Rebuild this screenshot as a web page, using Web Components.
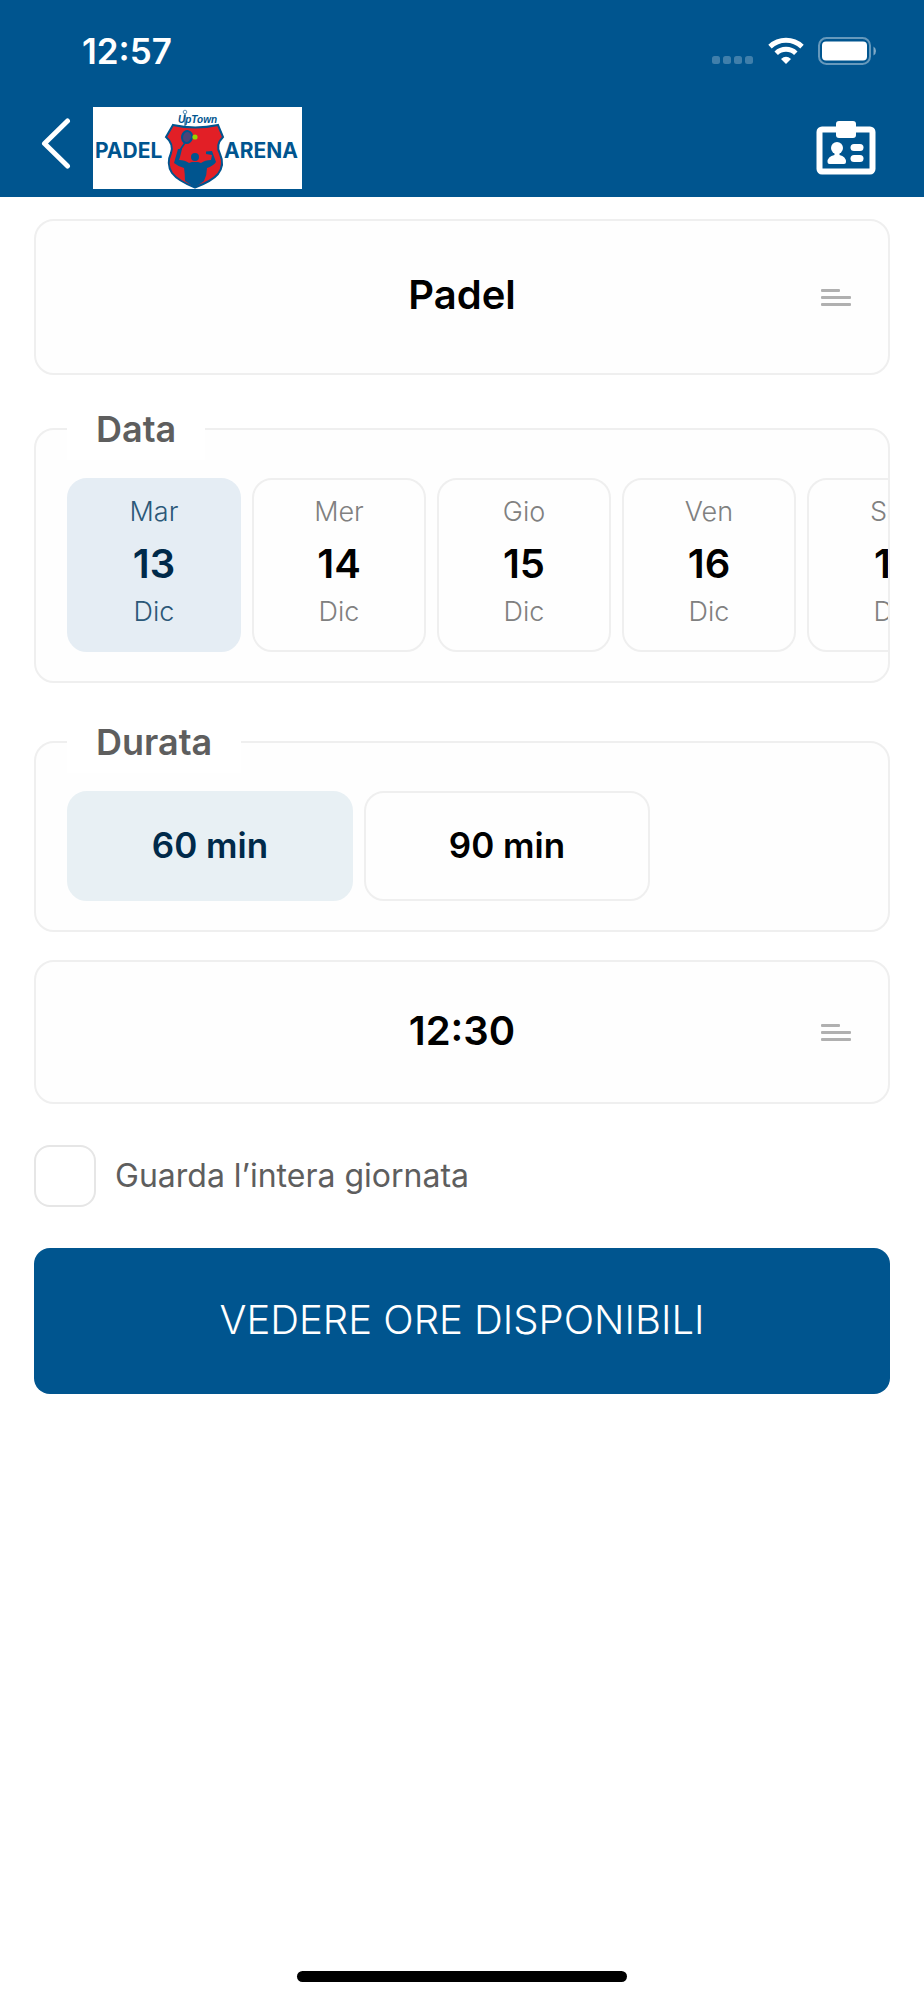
<!DOCTYPE html>
<html lang="it">
<head>
<meta charset="utf-8">
<meta name="viewport" content="width=device-width, initial-scale=1">
<title>Padel Arena</title>
<style>
  body {
    margin: 0;
    background: #fff;
    font-family: Inter, "Liberation Sans", sans-serif;
    --brand: #00558f;
    --navy: #002a4a;
    --line: #efefef;
    --card: #fefefe;
    --grey: #5e5e5e;
  }
</style>
</head>
<body>
<booking-app></booking-app>

<script>
class StatusBar extends HTMLElement {
  constructor() {
    super();
    this.attachShadow({ mode: 'open' });
    this.shadowRoot.innerHTML = `
      <style>
        :host {
          display: flex;
          align-items: center;
          justify-content: space-between;
          height: 101px;
          padding: 0 48px 0 82px;
          color: #fff;
        }
        time {
          font-size: 35px;
          font-weight: 600;
          line-height: 40px;
        }
        .icons {
          display: flex;
          align-items: center;
          gap: 14px;
        }
        svg {
          display: block;
        }
      </style>
      <time><slot></slot></time>
      <div class="icons">
        <svg width="42" height="28" viewBox="0 0 42 28" fill="#fff" fill-opacity="0.25">
          <rect x="0" y="19" width="8" height="8" rx="2.5"/>
          <rect x="11" y="19" width="8" height="8" rx="2.5"/>
          <rect x="22" y="19" width="8" height="8" rx="2.5"/>
          <rect x="33" y="19" width="8" height="8" rx="2.5"/>
        </svg>
        <svg width="36" height="28" viewBox="0 0 36 28" fill="none" stroke="#fff">
          <path d="M2 9.6 A23.5 23.5 0 0 1 34 9.6" stroke-width="5"/>
          <path d="M8.2 16.2 A14.2 14.2 0 0 1 27.8 16.2" stroke-width="5"/>
          <path d="M18 27 L13 22 Q18 17.6 23 22 Z" fill="#fff" stroke="none"/>
        </svg>
        <svg width="58" height="28" viewBox="0 0 58 28">
          <rect x="1" y="1" width="51" height="26" rx="7.5" fill="none" stroke="#fff" stroke-opacity="0.4" stroke-width="2"/>
          <rect x="4" y="4.5" width="45" height="19" rx="4" fill="#fff"/>
          <path d="M55.5 9.5 Q58 11 58 14 Q58 17 55.5 18.5 Z" fill="#fff" fill-opacity="0.5"/>
        </svg>
      </div>
    `;
  }
}

class ArenaLogo extends HTMLElement {
  constructor() {
    super();
    this.attachShadow({ mode: 'open' });
    this.shadowRoot.innerHTML = `
      <style>
        :host {
          display: block;
          background: #fff;
        }
        svg {
          display: block;
        }
        text {
          fill: #00558f;
          font-weight: 700;
        }
        .name {
          font-family: Inter, sans-serif;
          font-size: 21px;
        }
        .top {
          font-family: "Liberation Sans Narrow", "Liberation Sans", sans-serif;
          font-size: 10px;
          font-style: italic;
        }
      </style>
      <svg width="209" height="82" viewBox="0 0 209 82" role="img" aria-label="UpTown Padel Arena">
        <path d="M80 18 Q102 23 125 18 L130 30 Q122 38 127 47 Q132 58 125 67 Q119 74 102 80.500 Q85 74 79 66 Q73 57 78 46 Q81 37 73 30 Z" fill="#e21f26" stroke="#00558f" stroke-width="2"/>
        <ellipse cx="94" cy="30" rx="5" ry="6" fill="#4d4376" stroke="#00558f" stroke-width="2" transform="rotate(12 94 30)"/>
        <path d="M92.500 35 L87 43" stroke="#00558f" stroke-width="1.800"/>
        <circle cx="102" cy="30" r="2.600" fill="#95d600"/>
        <circle cx="102" cy="50" r="4" fill="#00558f"/>
        <path d="M85 42 L89 42 L87 50 L86 53 Q92 53 96 56 L99 55 L105 55 L108 56 Q112 53 118 53 L119 48 L113 47 L113 44.500 L119 44 L123 55 Q120 59 114 61 Q114 68 111 74 L102 80.500 L92 74 Q92 67 91 61 Q86 60 81 56 Z" fill="#00558f"/>
        <circle cx="92" cy="5" r="1.800" fill="none" stroke="#5f92b8"/>
        <path d="M92 7 V19" stroke="#00558f"/>
        <text class="top" x="85" y="15.500">UpTown</text>
        <text class="name" x="2" y="51">PADEL</text>
        <text class="name" x="131" y="51">ARENA</text>
      </svg>
    `;
  }
}

class NavBar extends HTMLElement {
  constructor() {
    super();
    this.attachShadow({ mode: 'open' });
    this.shadowRoot.innerHTML = `
      <style>
        :host {
          display: flex;
          align-items: center;
          padding: 6px 48px 8px 40px;
        }
        button {
          display: block;
          margin: 0;
          padding: 0;
          border: 0;
          background: none;
          cursor: pointer;
        }
        .back {
          margin-right: 21px;
        }
        .member {
          margin-left: auto;
        }
        svg {
          display: block;
        }
      </style>
      <button class="back" type="button" aria-label="Indietro">
        <svg width="32" height="60" viewBox="0 0 32 60" fill="none" stroke="#fff" stroke-width="5" stroke-linecap="round" stroke-linejoin="round">
          <path d="M27.500 3 L4.500 25.500 L27.500 48"/>
        </svg>
      </button>
      <slot></slot>
      <button class="member" type="button" aria-label="Tessera">
        <svg width="60" height="54" viewBox="0 0 60 54" fill="#fff">
          <rect x="3.500" y="8.500" width="53" height="42" rx="2.500" fill="none" stroke="#fff" stroke-width="6"/>
          <rect x="20" y="0" width="20" height="17" rx="3"/>
          <circle cx="21" cy="27" r="6"/>
          <path d="M18.500 30 H23.500 V34 Q30 35.500 30 41 Q30 43 28 43 H13.500 Q11.500 43 11.500 41 Q11.500 35.500 18.500 34 Z"/>
          <rect x="34.500" y="23" width="13" height="7" rx="3.500"/>
          <rect x="34.500" y="34" width="13" height="7" rx="3.500"/>
        </svg>
      </button>
    `;
  }
}

// Select box with a centred value and a small list icon on the right
class PickerField extends HTMLElement {
  constructor() {
    super();
    this.attachShadow({ mode: 'open' });
    this.shadowRoot.innerHTML = `
      <style>
        :host {
          display: grid;
          align-items: center;
          border: 2px solid var(--line);
          border-radius: 20px;
          background: var(--card);
        }
        select, svg {
          grid-area: 1 / 1;
        }
        select {
          appearance: none;
          width: 100%;
          margin: 0;
          padding: var(--pad, 50px 70px 54px);
          border: 0;
          border-radius: 18px;
          background: none;
          color: #000;
          font: 600 40px/48px Inter, "Liberation Sans", sans-serif;
          text-align: center;
          text-align-last: center;
        }
        svg {
          justify-self: end;
          margin-right: 37px;
          pointer-events: none;
        }
      </style>
      <select aria-label="${this.getAttribute('label')}">
        <option>${this.getAttribute('value')}</option>
      </select>
      <svg width="30" height="17" viewBox="0 0 30 17" fill="#b0b0b0">
        <rect x="0" y="0" width="19" height="3" rx="1"/>
        <rect x="0" y="7" width="30" height="3" rx="1"/>
        <rect x="0" y="14" width="30" height="3" rx="1"/>
      </svg>
    `;
  }
}

class FieldGroup extends HTMLElement {
  constructor() {
    super();
    this.attachShadow({ mode: 'open' });
    this.shadowRoot.innerHTML = `
      <style>
        :host {
          display: block;
        }
        fieldset {
          min-width: 0;
          margin: 0;
          padding: 0 0 29px;
          border: 2px solid var(--line);
          border-radius: 20px;
          background: var(--card);
        }
        legend {
          margin-left: 31px;
          padding: 0 29px;
          background: #fff;
          color: var(--grey);
          font-size: 36px;
          font-weight: 600;
          line-height: 62px;
        }
        .row {
          display: flex;
          gap: 11px;
          margin-top: 18px;
          padding-left: 31px;
          overflow-x: auto;
          scrollbar-width: none;
        }
      </style>
      <fieldset>
        <legend>${this.getAttribute('label')}</legend>
        <div class="row"><slot></slot></div>
      </fieldset>
    `;
  }
}

class DateTile extends HTMLElement {
  constructor() {
    super();
    this.attachShadow({ mode: 'open' });
    const checked = this.hasAttribute('checked') ? 'checked' : '';
    this.shadowRoot.innerHTML = `
      <style>
        :host {
          display: block;
          flex: none;
        }
        label {
          display: flex;
          flex-direction: column;
          box-sizing: border-box;
          width: 174px;
          padding: 14px 0 20px;
          border: 2px solid var(--line);
          border-radius: 20px;
          color: #808080;
          font-size: 27px;
          font-weight: 300;
          line-height: 36px;
          text-align: center;
          cursor: pointer;
        }
        input {
          appearance: none;
          position: absolute;
          margin: 0;
        }
        strong {
          margin: 16px 0 12px;
          color: #000;
          font-size: 40px;
          font-weight: 600;
        }
        label:has(:checked) {
          border-color: #e5edf4;
          background: #e5edf4;
          color: #2b5878;
        }
        label:has(:checked) strong {
          color: var(--navy);
        }
      </style>
      <label>
        <input type="radio" name="data" ${checked}>
        <span>${this.getAttribute('day')}</span>
        <strong>${this.getAttribute('number')}</strong>
        <span>${this.getAttribute('month')}</span>
      </label>
    `;
  }
}

class DurationTile extends HTMLElement {
  constructor() {
    super();
    this.attachShadow({ mode: 'open' });
    const checked = this.hasAttribute('checked') ? 'checked' : '';
    this.shadowRoot.innerHTML = `
      <style>
        :host {
          display: block;
          flex: none;
        }
        label {
          display: block;
          box-sizing: border-box;
          width: 286px;
          padding: 31px 0 33px;
          border: 2px solid var(--line);
          border-radius: 20px;
          color: #000;
          font-size: 35px;
          font-weight: 600;
          line-height: 42px;
          text-align: center;
          cursor: pointer;
        }
        input {
          appearance: none;
          position: absolute;
          margin: 0;
        }
        label:has(:checked) {
          border-color: #e8f0f4;
          background: #e8f0f4;
          color: var(--navy);
        }
      </style>
      <label>
        <input type="radio" name="durata" ${checked}>
        <slot></slot>
      </label>
    `;
  }
}

class CheckField extends HTMLElement {
  constructor() {
    super();
    this.attachShadow({ mode: 'open' });
    this.shadowRoot.innerHTML = `
      <style>
        :host {
          display: block;
        }
        label {
          display: flex;
          align-items: center;
          gap: 19px;
          color: var(--grey);
          font-size: 32px;
          line-height: 40px;
        }
        input {
          appearance: none;
          box-sizing: border-box;
          flex: none;
          width: 62px;
          height: 62px;
          margin: 0;
          border: 2px solid #e6e6e6;
          border-radius: 16px;
          background: #fff;
        }
        input:checked {
          background: var(--brand);
        }
      </style>
      <label><input type="checkbox"><span><slot></slot></span></label>
    `;
  }
}

class ActionButton extends HTMLElement {
  constructor() {
    super();
    this.attachShadow({ mode: 'open' });
    this.shadowRoot.innerHTML = `
      <style>
        :host {
          display: block;
        }
        button {
          display: block;
          width: 100%;
          padding: 48px 24px 50px;
          border: 0;
          border-radius: 16px;
          background: var(--brand);
          color: #fff;
          font-family: inherit;
          font-size: 40px;
          font-weight: 300;
          line-height: 48px;
          cursor: pointer;
        }
      </style>
      <button type="button"><slot></slot></button>
    `;
  }
}

class BookingApp extends HTMLElement {
  constructor() {
    super();
    this.attachShadow({ mode: 'open' });
    this.shadowRoot.innerHTML = `
      <style>
        :host {
          display: flex;
          flex-direction: column;
          min-height: 100vh;
        }
        header {
          background: var(--brand);
        }
        main {
          display: flex;
          flex-direction: column;
          gap: 28px;
          padding: 22px 34px;
        }
        .first {
          margin-bottom: -5px;
        }
        .time {
          --pad: 45px 70px 47px;
        }
        check-field {
          margin: 13px 0;
        }
        .home {
          width: 330px;
          height: 11px;
          margin: auto auto 18px;
          border-radius: 6px;
          background: #000;
        }
      </style>
      <header>
        <status-bar>12:57</status-bar>
        <nav-bar><arena-logo></arena-logo></nav-bar>
      </header>
      <main>
        <picker-field class="first" label="Sport" value="Padel"></picker-field>
        <field-group label="Data">
          <date-tile day="Mar" number="13" month="Dic" checked></date-tile>
          <date-tile day="Mer" number="14" month="Dic"></date-tile>
          <date-tile day="Gio" number="15" month="Dic"></date-tile>
          <date-tile day="Ven" number="16" month="Dic"></date-tile>
          <date-tile day="Sab" number="17" month="Dic"></date-tile>
        </field-group>
        <field-group label="Durata">
          <duration-tile checked>60 min</duration-tile>
          <duration-tile>90 min</duration-tile>
        </field-group>
        <picker-field class="time" label="Ora" value="12:30"></picker-field>
        <check-field>Guarda l’intera giornata</check-field>
        <action-button>VEDERE ORE DISPONIBILI</action-button>
      </main>
      <div class="home"></div>
    `;
  }
}

customElements.define('status-bar', StatusBar);
customElements.define('arena-logo', ArenaLogo);
customElements.define('nav-bar', NavBar);
customElements.define('picker-field', PickerField);
customElements.define('field-group', FieldGroup);
customElements.define('date-tile', DateTile);
customElements.define('duration-tile', DurationTile);
customElements.define('check-field', CheckField);
customElements.define('action-button', ActionButton);
customElements.define('booking-app', BookingApp);
</script>
</body>
</html>
